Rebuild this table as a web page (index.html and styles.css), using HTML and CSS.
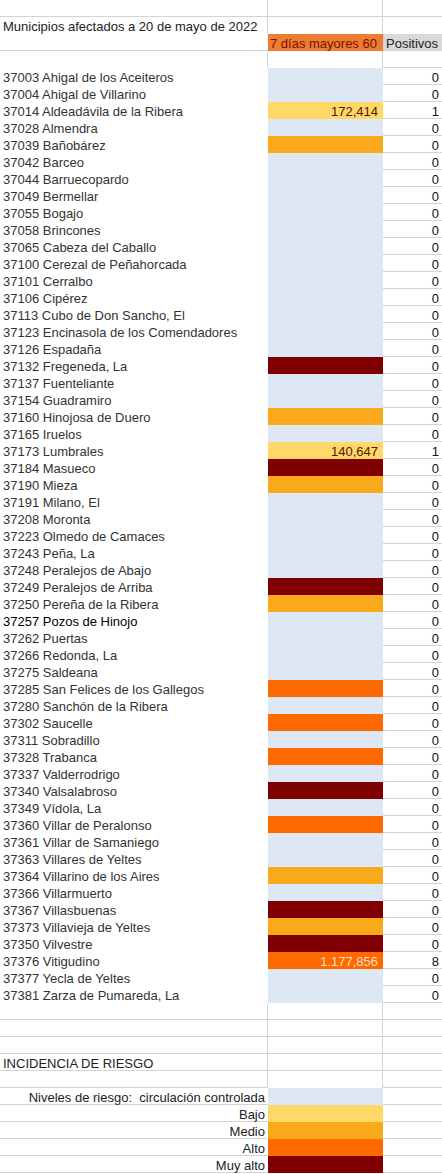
FILE: index.html
```html
<!DOCTYPE html>
<html lang="es">
<head>
  <meta charset="UTF-8" />
  <meta name="viewport" content="width=device-width, initial-scale=1.0"/>
  <title>Municipios afectados</title>
  <link rel="stylesheet" href="styles.css">
</head>
<body>
  <div class="sheet">
    <!-- cabecera -->
    <div class="g"></div><div class="g"></div><div class="gb"></div>
    <div class="gr">Municipios afectados a 20 de mayo de 2022</div><div class="gr"></div><div></div>
    <div class="gb"></div><div class="head-inc">7 días mayores 60</div><div class="head-pos">Positivos</div>
    <div class="gr"></div><div class="gr"></div><div class="gb"></div>

    <!-- municipios -->
    <div class="name">37003 Ahigal de los Aceiteros</div><div class="lv0"></div><div class="pos">0</div>
    <div class="name">37004 Ahigal de Villarino</div><div class="lv0"></div><div class="pos">0</div>
    <div class="name">37014 Aldeadávila de la Ribera</div><div class="lv1">172,414</div><div class="pos">1</div>
    <div class="name">37028 Almendra</div><div class="lv0"></div><div class="pos">0</div>
    <div class="name">37039 Bañobárez</div><div class="lv2"></div><div class="pos">0</div>
    <div class="name">37042 Barceo</div><div class="lv0"></div><div class="pos">0</div>
    <div class="name">37044 Barruecopardo</div><div class="lv0"></div><div class="pos">0</div>
    <div class="name">37049 Bermellar</div><div class="lv0"></div><div class="pos">0</div>
    <div class="name">37055 Bogajo</div><div class="lv0"></div><div class="pos">0</div>
    <div class="name">37058 Brincones</div><div class="lv0"></div><div class="pos">0</div>
    <div class="name">37065 Cabeza del Caballo</div><div class="lv0"></div><div class="pos">0</div>
    <div class="name">37100 Cerezal de Peñahorcada</div><div class="lv0"></div><div class="pos">0</div>
    <div class="name">37101 Cerralbo</div><div class="lv0"></div><div class="pos">0</div>
    <div class="name">37106 Cipérez</div><div class="lv0"></div><div class="pos">0</div>
    <div class="name">37113 Cubo de Don Sancho, El</div><div class="lv0"></div><div class="pos">0</div>
    <div class="name">37123 Encinasola de los Comendadores</div><div class="lv0"></div><div class="pos">0</div>
    <div class="name">37126 Espadaña</div><div class="lv0"></div><div class="pos">0</div>
    <div class="name">37132 Fregeneda, La</div><div class="lv4"></div><div class="pos">0</div>
    <div class="name">37137 Fuenteliante</div><div class="lv0"></div><div class="pos">0</div>
    <div class="name">37154 Guadramiro</div><div class="lv0"></div><div class="pos">0</div>
    <div class="name">37160 Hinojosa de Duero</div><div class="lv2"></div><div class="pos">0</div>
    <div class="name">37165 Iruelos</div><div class="lv0"></div><div class="pos">0</div>
    <div class="name">37173 Lumbrales</div><div class="lv1">140,647</div><div class="pos">1</div>
    <div class="name">37184 Masueco</div><div class="lv4"></div><div class="pos">0</div>
    <div class="name">37190 Mieza</div><div class="lv2"></div><div class="pos">0</div>
    <div class="name">37191 Milano, El</div><div class="lv0"></div><div class="pos">0</div>
    <div class="name">37208 Moronta</div><div class="lv0"></div><div class="pos">0</div>
    <div class="name">37223 Olmedo de Camaces</div><div class="lv0"></div><div class="pos">0</div>
    <div class="name">37243 Peña, La</div><div class="lv0"></div><div class="pos">0</div>
    <div class="name">37248 Peralejos de Abajo</div><div class="lv0"></div><div class="pos">0</div>
    <div class="name">37249 Peralejos de Arriba</div><div class="lv4"></div><div class="pos">0</div>
    <div class="name">37250 Pereña de la Ribera</div><div class="lv2"></div><div class="pos">0</div>
    <div class="name dark">37257 Pozos de Hinojo</div><div class="lv0"></div><div class="pos">0</div>
    <div class="name">37262 Puertas</div><div class="lv0"></div><div class="pos">0</div>
    <div class="name">37266 Redonda, La</div><div class="lv0"></div><div class="pos">0</div>
    <div class="name">37275 Saldeana</div><div class="lv0"></div><div class="pos">0</div>
    <div class="name">37285 San Felices de los Gallegos</div><div class="lv3"></div><div class="pos">0</div>
    <div class="name">37280 Sanchón de la Ribera</div><div class="lv0"></div><div class="pos">0</div>
    <div class="name">37302 Saucelle</div><div class="lv3"></div><div class="pos">0</div>
    <div class="name">37311 Sobradillo</div><div class="lv0"></div><div class="pos">0</div>
    <div class="name">37328 Trabanca</div><div class="lv3"></div><div class="pos">0</div>
    <div class="name">37337 Valderrodrigo</div><div class="lv0"></div><div class="pos">0</div>
    <div class="name">37340 Valsalabroso</div><div class="lv4"></div><div class="pos">0</div>
    <div class="name">37349 Vídola, La</div><div class="lv0"></div><div class="pos">0</div>
    <div class="name">37360 Villar de Peralonso</div><div class="lv3"></div><div class="pos">0</div>
    <div class="name">37361 Villar de Samaniego</div><div class="lv0"></div><div class="pos">0</div>
    <div class="name">37363 Villares de Yeltes</div><div class="lv0"></div><div class="pos">0</div>
    <div class="name">37364 Villarino de los Aires</div><div class="lv2"></div><div class="pos">0</div>
    <div class="name">37366 Villarmuerto</div><div class="lv0"></div><div class="pos">0</div>
    <div class="name">37367 Villasbuenas</div><div class="lv4"></div><div class="pos">0</div>
    <div class="name">37373 Villavieja de Yeltes</div><div class="lv2"></div><div class="pos">0</div>
    <div class="name">37350 Vilvestre</div><div class="lv4"></div><div class="pos">0</div>
    <div class="name">37376 Vitigudino</div><div class="lv3">1.177,856</div><div class="pos">8</div>
    <div class="name">37377 Yecla de Yeltes</div><div class="lv0"></div><div class="pos">0</div>
    <div class="name">37381 Zarza de Pumareda, La</div><div class="lv0"></div><div class="pos">0</div>

    <!-- leyenda -->
    <div class="g"></div><div class="g"></div><div class="gb"></div>
    <div class="g"></div><div class="g"></div><div class="gb"></div>
    <div class="g"></div><div class="g"></div><div class="gb"></div>
    <div class="g">INCIDENCIA DE RIESGO</div><div class="g"></div><div class="gb"></div>
    <div class="g"></div><div class="gr"></div><div class="gb"></div>
    <div class="label">Niveles de riesgo:  circulación controlada</div><div class="lv0"></div><div class="gb"></div>
    <div class="label">Bajo</div><div class="lv1"></div><div class="gb"></div>
    <div class="label">Medio</div><div class="lv2"></div><div class="gb"></div>
    <div class="label">Alto</div><div class="lv3"></div><div class="gb"></div>
    <div class="label">Muy alto</div><div class="lv4"></div><div class="gb"></div>
  </div>
</body>
</html>
```

FILE: styles.css
```css
body {
  margin: 0;
  background: #fff;
}
.sheet {
  display: grid;
  grid-template-columns: 268px 115px 59px;
  grid-auto-rows: 17px;
  font: 13px/17px "Liberation Sans", Arial, sans-serif;
  color: #222;
}
.sheet > div {
  box-sizing: border-box;
  padding: 1px 3px 0;
  white-space: pre;
}

/* lineas de la cuadricula */
.g { border-right: 1px solid #d4d4d4; border-bottom: 1px solid #d4d4d4; }
.gb { border-bottom: 1px solid #d4d4d4; }
.gr { border-right: 1px solid #d4d4d4; }

.head-inc { background: #ee7d31; color: #7a0f00; padding-left: 2px !important; }
.head-pos { background: #d9d9d9; color: #222; border-bottom: 1px solid #d4d4d4; }

.name { color: #333; }
.name.dark { color: #000; }
.pos { text-align: right; color: #111; border-bottom: 1px solid #d4d4d4; }
.label { text-align: right; color: #222; border-bottom: 1px solid #d4d4d4; padding-right: 3px !important; }

/* niveles de riesgo */
.lv0, .lv1, .lv2, .lv3, .lv4 { text-align: right; padding-right: 5px !important; }
.lv0 { background: #dde8f4; }
.lv1 { background: #fed968; color: #5a1400; }
.lv2 { background: #f9a91a; }
.lv3 { background: #fe6a00; color: #ffdcc0; }
.lv4 { background: #7e0000; }
```
